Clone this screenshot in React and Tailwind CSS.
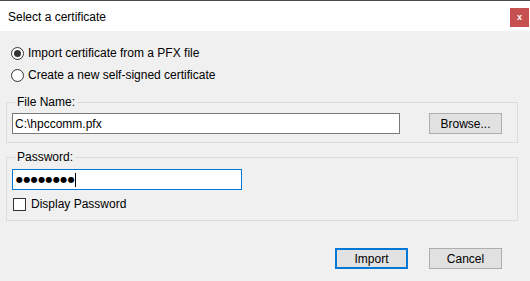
import React from 'react';

const font = { fontFamily: '"Liberation Sans", Arial, sans-serif' };

function Radio({ checked, label }) {
  return (
    <label className="flex items-center h-[13px] gap-[4px] text-[12px] text-black">
      <span className="w-[13px] h-[13px] rounded-full border border-[#333] bg-white flex items-center justify-center shrink-0">
        {checked && <span className="w-[7px] h-[7px] rounded-full bg-[#333]" />}
      </span>
      <span className="leading-[13px]">{label}</span>
    </label>
  );
}

function WinButton({ children, focused }) {
  return (
    <button
      className={
        focused
          ? 'w-[73px] h-[21px] bg-[#e1e1e1] border-2 border-[#0078d7] text-[12px] text-black leading-none'
          : 'w-[73px] h-[21px] bg-[#e1e1e1] border border-[#adadad] text-[12px] text-black leading-none'
      }
    >
      {children}
    </button>
  );
}

export default function App() {
  return (
    <div className="w-[530px] h-[281px] bg-[#f0f0f0] flex flex-col overflow-hidden select-none" style={font}>
      {/* strip of desktop behind the window */}
      <div className="h-[1px] bg-[#4a4a4a]" />

      {/* Title bar */}
      <div className="h-[30px] bg-white flex justify-between">
        <span className="pl-[8px] pt-[9px] text-[12px] text-black leading-[14px]">Select a certificate</span>
        <div className="mt-[7px] mr-[1px] w-[19px] h-[19px] bg-[#c75050] flex items-center justify-center text-white text-[9px] font-bold leading-none">
          x
        </div>
      </div>

      {/* Content */}
      <div className="flex flex-col px-[6px] pr-[12px]">
        <div className="flex flex-col gap-[9px] pl-[5px] pt-[16px]">
          <Radio checked label="Import certificate from a PFX file" />
          <Radio label="Create a new self-signed certificate" />
        </div>

        <fieldset className="mt-[13px] border border-[#dcdcdc] px-[5px] pb-[8px]">
          <legend className="ml-[3px] px-[2px] text-[12px] leading-[14px] text-black">File Name:</legend>
          <div className="flex items-center justify-between mt-[4px] pr-[10px]">
            <div className="w-[388px] h-[21px] bg-white border border-[#7a7a7a] flex items-center px-[2px] text-[12px] text-black">
              C:\hpccomm.pfx
            </div>
            <WinButton>Browse...</WinButton>
          </div>
        </fieldset>

        <fieldset className="mt-[7px] border border-[#dcdcdc] px-[5px] pb-[9px]">
          <legend className="ml-[3px] px-[2px] text-[12px] leading-[14px] text-black">Password:</legend>
          <div className="mt-[5px] w-[230px] h-[21px] bg-white border border-[#0078d7] flex items-center px-[3px]">
            <span className="text-[8px] tracking-[0.4px] text-black leading-none" style={{ fontFamily: '"DejaVu Sans", sans-serif' }}>
              ●●●●●●●●
            </span>
            <span className="w-[1px] h-[14px] bg-black" />
          </div>
          <label className="mt-[8px] flex items-center gap-[5px] pl-[1px] text-[12px] text-black">
            <span className="w-[13px] h-[13px] border border-[#333] bg-white shrink-0" />
            <span className="leading-[13px]">Display Password</span>
          </label>
        </fieldset>

        <div className="flex justify-end gap-[21px] mt-[27px] pr-[16px]">
          <WinButton focused>Import</WinButton>
          <WinButton>Cancel</WinButton>
        </div>
      </div>
    </div>
  );
}
